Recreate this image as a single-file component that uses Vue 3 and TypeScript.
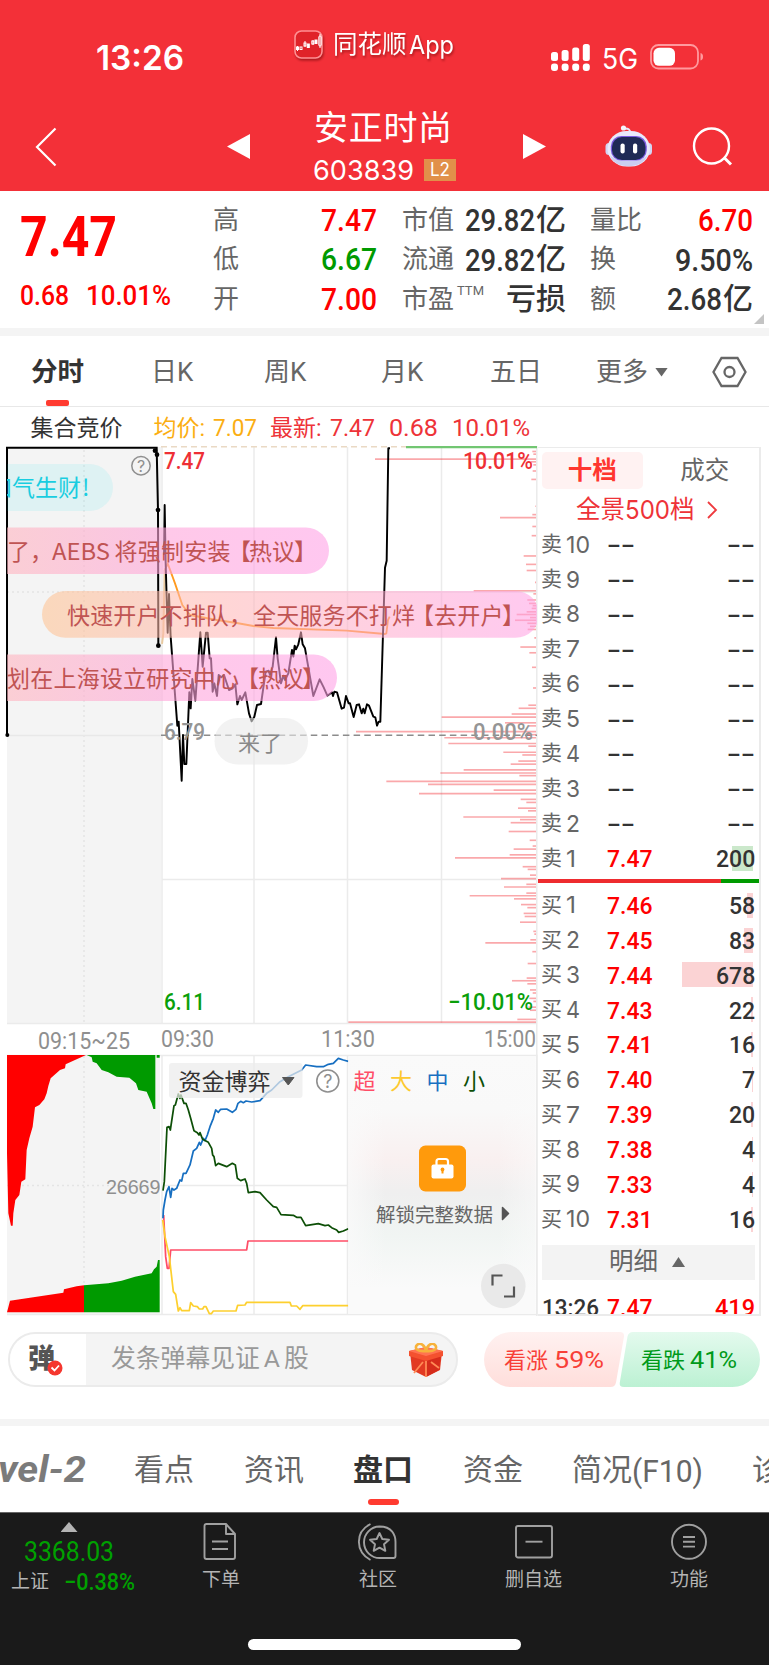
<script setup lang="ts">
import { defineComponent, h } from 'vue'

/** Condensed numeral label: a single line of text set to an exact width. */
const Fit = defineComponent({
  props: {
    t: { type: String, required: true },
    w: { type: Number, required: true },
    s: { type: Number, required: true },
  },
  setup(p) {
    return () =>
      h('svg', { class: 'fit', width: p.w, height: p.s, viewBox: `0 0 ${p.w} ${p.s}` }, [
        h('text', { x: 0, y: p.s * 0.856, 'font-size': p.s, textLength: p.w, lengthAdjust: 'spacingAndGlyphs' }, p.t),
      ])
  },
})

interface Level { side: string; no: string; price: string; vol: string; bar: number }

const asks: Level[] = [10, 9, 8, 7, 6, 5, 4, 3, 2].map((n) => ({ side: '卖', no: String(n), price: '--', vol: '--', bar: 0 }))
asks.push({ side: '卖', no: '1', price: '7.47', vol: '200', bar: 21 })

const bids: Level[] = (
  [
    ['7.46', '58', 6], ['7.45', '83', 9], ['7.44', '678', 71], ['7.43', '22', 2.5], ['7.41', '16', 2],
    ['7.40', '7', 1], ['7.39', '20', 2], ['7.38', '4', 0.6], ['7.33', '4', 0.6], ['7.31', '16', 2],
  ] as [string, string, number][]
).map(([price, vol, bar], i) => ({ side: '买', no: String(i + 1), price, vol, bar }))

const volWidth = (v: string) => (v === '--' ? 28 : v.length * 13.1)
const noWidth = (n: string) => (n === '1' ? 10 : n === '10' ? 24 : 14)

// Turnover distribution by price: [vertical offset, left end], right-aligned at 558
const dist: [number, number][] = [
  [30, 547], [37, 550], [50, 75], [57, 542], [65, 550], [81, 548], [103, 544], [173, 556], [195, 547], [203, 450],
  [226, 547], [250, 545], [303, 521], [325, 528], [341, 530], [372, 555], [394, 371], [402, 550], [418, 532], [427, 537],
  [433, 548], [440, 545], [449, 530], [456, 500], [464, 540], [471, 495], [479, 532], [487, 540], [495, 533], [517, 553],
  [541, 511], [556, 538], [594, 546], [648, 549], [693, 535], [701, 506], [716, 485], [724, 275], [739, 465], [747, 537],
  [762, 18], [770, 530], [778, 283], [793, 295], [800, 535], [816, 460], [823, 517], [839, 505], [847, 482], [862, 341],
  [870, 271], [877, 508], [892, 109], [900, 234], [915, 431], [924, 207], [939, 512], [947, 529], [962, 504], [969, 534],
  [985, 340], [992, 510], [1000, 482], [1023, 476], [1046, 539], [1061, 548], [1069, 491], [1084, 479], [1092, 315],
  [1115, 518], [1122, 533], [1137, 540], [1146, 453], [1161, 529], [1168, 462], [1184, 529], [1191, 359], [1199, 492],
  [1214, 513], [1222, 532], [1237, 521], [1245, 524], [1260, 510], [1284, 550], [1291, 553], [1306, 541], [1314, 406],
  [1337, 547], [1368, 533], [1406, 530], [1413, 486], [1421, 532], [1437, 540], [1445, 548], [1459, 538], [1467, 550],
  [1482, 535], [1490, 540], [1514, 502], [1521, -5],
]

const price =
  'M42 345L44 195 47 370 53 578 57 462 62 590 82 857 86 845 95 1022 99 885 103 972 109 972 118 757 122 805 127 717 136 782 151 577 158 680 168 578 173 578 179 655 183 655 188 755 193 730 201 768 206 705 214 712 222 705 237 750 248 745 256 733 262 793 270 768 275 780 286 757 297 820 305 844 313 830 321 795 333 792 347 695 356 692 360 705 368 680 378 592 383 655 388 692 393 730 400 707 405 720 415 700 426 630 430 650 434 617 438 628 445 613 453 577 458 613 465 625 472 665 490 768 509 718 521 742 532 767 546 757 549 768 553 755 561 757 575 806 582 803 588 768 596 790 600 790 611 831 620 795 627 793 635 820 640 806 644 820 651 793 657 797 670 830 676 832 681 857 686 845 691 845 705 383 710 362 715 25 720 25'
const avg = 'M45 390L53 370 75 430 97 495 120 525 200 540 260 549 310 558 370 564 590 572 705 582 709 580 714 540 719 530'

const flows = {
  mid: 'M489 625L490 600 495 570 500 545 507 530 512 562 516 535 522 540 530 535 540 510 545 513 550 490 558 490 570 465 580 423 590 415 598 397 602 405 610 385 615 392 622 375 630 350 640 325 647 300 655 307 662 298 680 297 697 307 708 298 714 280 722 274 730 278 738 273 755 276 780 272 800 250 815 240 840 215 865 200 905 180 917 165 950 170 970 170 985 163 1000 160 1015 145 1030 150 1045 154',
  small: 'M489 542L493 515 501 352 507 350 511 360 522 287 526 285 535 252 540 265 543 255 552 280 558 280 565 300 572 325 582 362 592 368 597 375 600 368 608 388 625 397 635 415 638 435 642 440 647 467 655 460 680 470 697 460 706 465 712 505 722 512 735 507 740 520 745 548 765 545 780 548 800 570 820 590 830 592 843 614 880 616 890 622 903 622 917 647 955 641 975 647 985 645 995 653 1010 660 1016 667 1030 663 1045 656',
  huge: 'M491 615L497 740 502 775 507 775 512 720 740 720 744 693 1045 693',
  big: 'M488 630L495 680 508 740 520 845 527 853 535 903 540 893 545 902 568 902 572 878 580 888 592 890 598 897 608 897 612 890 618 890 628 911 634 911 640 903 708 903 713 886 735 885 740 877 870 877 874 888 890 888 900 898 908 887 1045 887',
}
</script>

<template>
  <div class="screen">
    <header class="top">
      <div class="status">
        <span class="clock"><Fit t="13:26" :w="88" :s="34" /></span>
        <div class="brand">
          <svg width="29" height="29" viewBox="0 0 29 29">
            <rect x="1" y="1" width="27" height="27" rx="6.5" fill="#e02329" stroke="#ff9093" stroke-width="1.6" />
            <g stroke="#fff" stroke-width="1" fill="none">
              <path d="M3.5 16v5M11 11v6M19 10v5M26 4v14" />
              <rect x="2.5" y="17" width="2" height="2.5" fill="#fff" /><rect x="6" y="17" width="2" height="2.5" />
              <rect x="10" y="13" width="2" height="3" /><rect x="13.3" y="14" width="2" height="3.5" fill="#fff" />
              <rect x="17.8" y="11" width="2" height="3" /><rect x="21" y="10" width="2" height="3.5" fill="#fff" />
              <rect x="24.8" y="6" width="2.4" height="10" rx="1" />
            </g>
          </svg>
          <span>同花顺</span><Fit t="App" :w="45" :s="25" />
        </div>
        <div class="signals">
          <svg width="39" height="28" viewBox="0 0 39 28" fill="#fff">
            <rect x="0" y="8" width="7" height="9" rx="2.5" /><rect x="10.6" y="6" width="7" height="11" rx="2.5" />
            <rect x="21.2" y="3.5" width="7" height="13.5" rx="2.5" /><rect x="31.8" y="0" width="7" height="17" rx="2.5" />
            <rect x="0" y="19.5" width="7" height="7.5" rx="3" /><rect x="10.6" y="19.5" width="7" height="7.5" rx="3" />
            <rect x="21.2" y="19.5" width="7" height="7.5" rx="3" /><rect x="31.8" y="19.5" width="7" height="7.5" rx="3" />
          </svg>
          <span class="net"><Fit t="5G" :w="36" :s="28" /></span>
          <svg width="54" height="26" viewBox="0 0 54 26">
            <rect x="1" y="1" width="47" height="23.5" rx="7.5" fill="none" stroke="#ff9a9e" stroke-width="1.8" />
            <rect x="3.5" y="3.8" width="21.5" height="18" rx="5.5" fill="#fff" />
            <path d="M50.500 9Q53 9.500 53 12.800T50.500 16.500z" fill="#ff9a9e" />
          </svg>
        </div>
      </div>
      <nav class="title-bar">
        <svg class="back" width="22" height="40" viewBox="0 0 22 40" fill="none" stroke="#fff" stroke-width="2.2"><path d="M20.500 1.500L2 20l18.500 18.500" /></svg>
        <svg class="prev" width="23" height="26" viewBox="0 0 23 26"><path d="M23 0v25L0 12.500z" fill="#fff" /></svg>
        <div class="stock">
          <h1>安正时尚</h1>
          <div class="code"><Fit t="603839" :w="101" :s="27.5" /><span class="l2"><Fit t="L2" :w="20" :s="18" /></span></div>
        </div>
        <svg class="next" width="23" height="26" viewBox="0 0 23 26"><path d="M0 0v25l23-12.500z" fill="#fff" /></svg>
        <svg class="robot" width="48" height="45" viewBox="0 0 48 45">
          <path d="M19 4.500c4-.5 6.500 1 6 4.500" fill="none" stroke="#e6e8fb" stroke-width="2" /><circle cx="18.500" cy="4" r="2.600" fill="#f4f4fd" />
          <rect x="0.500" y="19" width="8" height="12" rx="3.500" fill="#d3d5f3" /><rect x="39" y="19" width="8" height="12" rx="3.500" fill="#d3d5f3" />
          <rect x="2.500" y="7" width="42.500" height="35.500" rx="19" fill="#e8e9fb" />
          <path d="M5 31c4 15 33 15 37.500 0-6 8-31 8-37.500 0z" fill="#cbcdf0" />
          <rect x="5.800" y="12" width="36" height="24.500" rx="10.500" fill="#7a5be0" /><rect x="7" y="13" width="33.500" height="23" rx="10" fill="#1f2a55" />
          <rect x="15.500" y="19.500" width="4.200" height="10" rx="2" fill="#fff" /><rect x="28" y="19.500" width="4.200" height="10" rx="2" fill="#fff" />
        </svg>
        <svg class="search" width="42" height="42" viewBox="0 0 42 42" fill="none" stroke="#fff" stroke-width="2.400"><circle cx="19.500" cy="20" r="17.500" /><path d="M32 31.500l7 7" stroke-width="3" /></svg>
      </nav>
    </header>

    <section class="quote">
      <div class="last">
        <Fit t="7.47" :w="97" :s="55" />
        <div class="chg"><Fit t="0.68" :w="49" :s="28.5" /><Fit t="10.01%" :w="85" :s="28.5" /></div>
      </div>
      <dl class="col c1">
        <div><dt>高</dt><dd class="up"><Fit t="7.47" :w="56" :s="31" /></dd></div>
        <div><dt>低</dt><dd class="down"><Fit t="6.67" :w="56" :s="31" /></dd></div>
        <div><dt>开</dt><dd class="up"><Fit t="7.00" :w="56" :s="31" /></dd></div>
      </dl>
      <dl class="col c2">
        <div><dt>市值</dt><dd><Fit t="29.82" :w="70" :s="31" />亿</dd></div>
        <div><dt>流通</dt><dd><Fit t="29.82" :w="70" :s="31" />亿</dd></div>
        <div><dt>市盈<sup>TTM</sup></dt><dd>亏损</dd></div>
      </dl>
      <dl class="col c3">
        <div><dt>量比</dt><dd class="up"><Fit t="6.70" :w="55" :s="31" /></dd></div>
        <div><dt>换</dt><dd><Fit t="9.50%" :w="78" :s="31" /></dd></div>
        <div><dt>额</dt><dd><Fit t="2.68" :w="55" :s="31" />亿</dd></div>
      </dl>
      <i class="corner"></i>
    </section>

    <nav class="periods">
      <b>分时</b><span>日K</span><span>周K</span><span>月K</span><span>五日</span>
      <span class="more">更多<i></i></span>
      <svg width="35" height="32" viewBox="0 0 35 32" fill="none" stroke="#666" stroke-width="2.300"><path d="M9.500 2h16l8 14-8 14h-16l-8-14z" /><circle cx="17.500" cy="16" r="5" /></svg>
    </nav>

    <div class="legend">
      <span class="auction">集合竞价</span>
      <span class="avg">均价:<Fit t="7.07" :w="44" :s="23.5" /></span>
      <span class="new">最新:<Fit t="7.47" :w="45" :s="23.5" /></span>
      <span class="new"><Fit t="0.68" :w="49" :s="23.5" /></span>
      <span class="new"><Fit t="10.01%" :w="78" :s="23.5" /></span>
    </div>

    <main class="market">
      <svg class="chart" width="538" height="870" viewBox="0 446 538 870">
        <defs>
          <linearGradient id="g-rose"><stop offset="0" stop-color="#ffbcb4" /><stop offset=".55" stop-color="#ffa5d9" /><stop offset="1" stop-color="#ffa2e6" /></linearGradient>
          <linearGradient id="g-peach"><stop offset="0" stop-color="#ffc290" /><stop offset=".3" stop-color="#ffb8b0" /><stop offset="1" stop-color="#ff9fe4" /></linearGradient>
          <linearGradient id="g-lock" x1="0" x2="0" y1="0" y2="1"><stop offset="0" stop-color="#fafafa" /><stop offset=".2" stop-color="#f9f9f9" /><stop offset=".4" stop-color="#f9f0f0" /><stop offset=".53" stop-color="#efefef" /><stop offset=".7" stop-color="#f1f5f3" /><stop offset=".9" stop-color="#fafafa" /></linearGradient>
          <linearGradient id="g-side"><stop offset="0" stop-color="#fafafa" stop-opacity=".8" /><stop offset=".2" stop-color="#fafafa" stop-opacity="0" /><stop offset=".8" stop-color="#fafafa" stop-opacity="0" /><stop offset="1" stop-color="#fafafa" stop-opacity=".6" /></linearGradient>
          <clipPath id="plot"><rect x="7" y="446" width="530" height="580" /></clipPath>
        </defs>

        <!-- price pane -->
        <rect x="7" y="447" width="154" height="577" fill="#f4f4f4" />
        <g fill="none" stroke="#ebebeb" stroke-width="1.500">
          <path d="M7 1023.500H537M162 447V1023M254 447V1023M347.500 447V1023M441.500 447V1023M162 592H537M162 879.500H537M536.800 446V1316" />
          <path d="M84 450V1023M7 592H160" stroke-dasharray="2 3" stroke="#e4e4e4" />
          <path d="M7 735.500H161" stroke="#e8e8e8" />
        </g>
        <path d="M161 446.500H537" stroke="#ead9c4" stroke-width="1.800" stroke-dasharray="6 4" />
        <path d="M161 735.200H537" stroke="#8c8c8c" stroke-width="1.500" stroke-dasharray="6.500 4.200" />
        <g transform="translate(350 440) scale(.33333 .38270)">
          <path v-for="d in dist" :key="d[0]" :d="`M${d[1]} ${d[0]}H558`" stroke="#f33038" stroke-opacity=".42" stroke-width="4.300" />
        </g>
        <path d="M406 447.200H537" stroke="#72c672" stroke-width="2.200" />
        <g transform="translate(150 440) scale(.33333)" fill="none" stroke-linejoin="round">
          <path d="M-429 885V23H20L24 210 25 617" stroke="#000" stroke-width="6" stroke-linejoin="miter" />
          <g fill="#000"><circle cx="-428" cy="885" r="6" /><circle cx="15" cy="32" r="7" /><circle cx="21" cy="44" r="7" /><circle cx="24" cy="210" r="7" /><circle cx="25" cy="617" r="7" /></g>
          <path d="M36 612L40 580 44 390" stroke="#e8c9a0" stroke-width="6" />
          <path :d="avg" stroke="#ff9a1f" stroke-width="5.500" />
          <path :d="price" stroke="#000" stroke-width="5.800" />
        </g>
        <g class="num" font-size="23">
          <text x="164" y="468.500" textLength="41" lengthAdjust="spacingAndGlyphs" fill="#ee2f35">7.47</text>
          <text x="463" y="468.500" textLength="70" lengthAdjust="spacingAndGlyphs" fill="#ee2f35">10.01%</text>
          <text x="164" y="739.500" textLength="41" lengthAdjust="spacingAndGlyphs" fill="#959595">6.79</text>
          <text x="473" y="739.500" textLength="60" lengthAdjust="spacingAndGlyphs" fill="#959595">0.00%</text>
          <text x="164" y="1010" textLength="41" lengthAdjust="spacingAndGlyphs" fill="#0a9f0a">6.11</text>
          <text x="448" y="1010" textLength="85" lengthAdjust="spacingAndGlyphs" fill="#0a9f0a">−10.01%</text>
        </g>
        <circle cx="141" cy="465.800" r="9.200" fill="none" stroke="#8f8f8f" stroke-width="1.500" />
        <text class="query" x="141" y="471.500" font-size="16" text-anchor="middle">?</text>

        <!-- drifting comments -->
        <g class="danmu" clip-path="url(#plot)" font-size="23">
          <rect x="-60" y="464" width="173" height="47" rx="23.500" fill="#00d9e8" fill-opacity=".09" />
          <g fill="#19cde0"><text x="-11" y="495.500" textLength="92" lengthAdjust="spacing">和气生财</text><text x="82" y="495.500">!</text></g>
          <rect x="-60" y="527.500" width="389" height="46.500" rx="23.200" fill="url(#g-rose)" fill-opacity=".6" />
          <g fill="#c05453"><text x="7" y="559.500">了，</text><text x="52" y="559.500" textLength="58" lengthAdjust="spacingAndGlyphs">AEBS</text><text x="114.500" y="559.500" textLength="116">将强制安装</text><text x="228" y="559.500">【</text><text x="249" y="559.500" textLength="46">热议</text><text x="294" y="559.500">】</text></g>
          <rect x="42" y="591" width="497" height="46.800" rx="23.400" fill="url(#g-peach)" fill-opacity=".56" />
          <g fill="#c05453"><text x="67" y="623.500" textLength="185">快速开户不排队，</text><text x="253" y="623.500" textLength="162">全天服务不打烊</text><text x="411" y="623.500">【</text><text x="434" y="623.500" textLength="69.500">去开户</text><text x="502" y="623.500">】</text></g>
          <rect x="-60" y="654.500" width="397" height="46.500" rx="23.200" fill="url(#g-rose)" fill-opacity=".6" />
          <g fill="#c05453"><text x="7" y="687" textLength="232">划在上海设立研究中心</text><text x="236" y="687">【</text><text x="258" y="687" textLength="46">热议</text><text x="302" y="687">】</text></g>
          <rect x="214.500" y="718" width="93.500" height="46.500" rx="23.200" fill="#e9e9e9" fill-opacity=".6" />
          <text x="238" y="750.500" font-size="22" fill="#898989">来了</text>
        </g>

        <g class="axis" font-size="23" fill="#8f8f8f">
          <text x="38" y="1048.500" textLength="92" lengthAdjust="spacingAndGlyphs">09:15~25</text>
          <text x="161" y="1047" textLength="53" lengthAdjust="spacingAndGlyphs">09:30</text>
          <text x="321" y="1047" textLength="54" lengthAdjust="spacingAndGlyphs">11:30</text>
          <text x="484" y="1047" textLength="52" lengthAdjust="spacingAndGlyphs">15:00</text>
        </g>

        <!-- capital flow pane -->
        <rect x="7" y="1055" width="153" height="260" fill="#f4f4f4" />
        <g fill="none" stroke="#ebebeb" stroke-width="1.500">
          <path d="M7 1055.500H537V1314.500H7M162 1055V1314M254 1055V1314M347.500 1055V1314M162 1185.500H347" />
          <path d="M84 1056V1284M7 1185.500H160" stroke-dasharray="2 3" stroke="#e4e4e4" />
        </g>
        <g transform="translate(0 1010) scale(.33333)">
          <path fill="#f00" d="M21 135H258L225 150 197 163 195 175 180 180 152 205 145 228 140 250 133 268 118 285 105 292 98 350 88 385 80 420 76 508 64 515 58 555 46 570 40 610 38 647H33L25 610 21 430zM21 907L30 872 60 868 100 862 140 856 190 848 192 838 230 829 252 826V907z" />
          <path fill="#009a00" d="M260 135H466V297H460L455 280 440 245 415 240 408 220 388 203 350 200 325 187 305 180 290 160 278 155 275 142zM470 135h9v8h-9zM252 826L325 820 365 812 405 800 455 790 462 778 470 770 474 750H479V907H252z" />
          <g fill="none" stroke-width="5.200" stroke-linejoin="round">
            <path :d="flows.huge" stroke="#ff4d67" /><path :d="flows.big" stroke="#fdd02f" /><path :d="flows.mid" stroke="#176fc1" /><path :d="flows.small" stroke="#0d4f07" />
          </g>
        </g>
        <text class="mid" x="106" y="1193.500" font-size="19.800" textLength="54.500" fill="#8f8f8f">26669</text>
        <rect x="169" y="1063" width="133.500" height="35" rx="3" fill="#ececec" fill-opacity=".72" />
        <text class="danmu" x="178.500" y="1089.500" font-size="23" fill="#333">资金博弈</text>
        <path d="M282.500 1077.500h11.500l-5.750 7.500z" fill="#555" stroke="#555" stroke-linejoin="round" />
        <circle cx="327.800" cy="1081" r="11" fill="none" stroke="#8f8f8f" stroke-width="1.600" />
        <text class="query" x="327.800" y="1087.500" font-size="18" text-anchor="middle">?</text>

        <!-- locked area -->
        <rect x="348.500" y="1057" width="187" height="257" fill="url(#g-lock)" />
        <rect x="348.500" y="1057" width="187" height="257" fill="url(#g-side)" />
        <g class="danmu" font-size="22">
          <text x="353.500" y="1088.500" fill="#ff4d67">超</text><text x="390" y="1088.500" fill="#fdc92f">大</text>
          <text x="426.500" y="1088.500" fill="#176fc1">中</text><text x="463" y="1088.500" fill="#0d4f07">小</text>
          <text x="376" y="1221.500" font-size="19.500" fill="#666">解锁完整数据</text>
        </g>
        <rect x="419" y="1145.500" width="47" height="46" rx="6.500" fill="#ff9a0c" />
        <path d="M436.500 1166v-4.500q0-2.500 2.500-2.500h6.500q2.500 0 2.500 2.500v4.500" fill="none" stroke="#fff" stroke-width="2.200" />
        <rect x="431.500" y="1164.500" width="22" height="14" rx="2" fill="#fff" />
        <path d="M442.500 1168.500v5" stroke="#ff9a0c" stroke-width="2" /><circle cx="442.500" cy="1169.500" r="1.900" fill="#ff9a0c" />
        <path d="M502.500 1207.500l6 6-6 6z" fill="#555" stroke="#555" stroke-width="1.500" stroke-linejoin="round" />
        <circle cx="503.300" cy="1286" r="22.300" fill="#e9e9e9" />
        <path d="M492.500 1285.500v-10h10M504 1296.500h10v-10" fill="none" stroke="#555" stroke-width="2.200" />
      </svg>

      <aside class="book">
        <div class="book-tabs"><b>十档</b><span>成交</span></div>
        <div class="full">全景<Fit t="500" :w="45" :s="26" />档
          <svg width="11" height="18" viewBox="0 0 11 18" fill="none" stroke="#ee3a3e" stroke-width="1.800"><path d="M1 1l8 8-8 8" /></svg>
        </div>
        <div v-for="l in asks" :key="'a' + l.no" class="lv">
          <span class="side">{{ l.side }}<Fit :t="l.no" :w="noWidth(l.no)" :s="23.5" /></span>
          <span :class="l.price === '--' ? 'none' : 'px'"><Fit :t="l.price" :w="l.price === '--' ? 28 : 45.5" :s="24.5" /></span>
          <span class="vol sell"><i :style="{ width: l.bar + 'px' }"></i><Fit :t="l.vol" :w="volWidth(l.vol)" :s="24.5" /></span>
        </div>
        <div class="ratio"><i></i></div>
        <div v-for="l in bids" :key="'b' + l.no" class="lv">
          <span class="side">{{ l.side }}<Fit :t="l.no" :w="noWidth(l.no)" :s="23.5" /></span>
          <span class="px"><Fit :t="l.price" :w="45.5" :s="24.5" /></span>
          <span class="vol"><i :style="{ width: l.bar + 'px' }"></i><Fit :t="l.vol" :w="volWidth(l.vol)" :s="24.5" /></span>
        </div>
        <div class="detail">明细<i></i></div>
        <div class="lv tick">
          <span class="at"><Fit t="13:26" :w="57" :s="24.5" /></span>
          <span class="px"><Fit t="7.47" :w="45.5" :s="24.5" /></span>
          <span class="vol px"><Fit t="419" :w="40" :s="24.5" /></span>
        </div>
      </aside>
    </main>

    <section class="chat">
      <div class="input">
        <div class="toggle"><b>弹</b>
          <svg width="16" height="16" viewBox="0 0 16 16"><circle cx="8" cy="8" r="7.500" fill="#f5372f" /><path d="M4.500 7.500l3 3 4.500-5" fill="none" stroke="#fff" stroke-width="1.800" /></svg>
        </div>
        <span class="hint">发条弹幕见证<em>A</em>股</span>
        <svg class="gift" width="34" height="34" viewBox="0 0 34 34">
          <path d="M1 9l16-3 16 3-2 18-14 7-14-7z" fill="#e23a22" /><path d="M17 14l15-4-2 17-13 7z" fill="#d52c1b" />
          <path d="M0 8l17-4 17 4v5l-17 5-17-5z" fill="#f4512f" /><path d="M0 8l17-4 17 4-17 5z" fill="#ff7350" />
          <path d="M5 30l9-11M22 19l8 6M17 18v16" stroke="#ff8a55" stroke-width="1.800" />
          <path d="M17 8C8 9 5 5 8 2s8 0 9 6c1-6 6-9 9-6s0 7-9 6z" fill="none" stroke="#f7b23b" stroke-width="2.600" />
        </svg>
      </div>
      <svg class="vote" width="276" height="55" viewBox="0 0 276 55">
        <defs>
          <linearGradient id="v-up" x1="0" x2="0" y1="0" y2="1"><stop offset="0" stop-color="#fff1f0" /><stop offset="1" stop-color="#ffdedb" /></linearGradient>
          <linearGradient id="v-dn" x1="0" x2="0" y1="0" y2="1"><stop offset="0" stop-color="#e4faee" /><stop offset="1" stop-color="#bcf1d3" /></linearGradient>
        </defs>
        <path d="M27.500 0H136q4.500 0 4 4.500L132 50.500q-1 4.500-5.500 4.500H27.500a27.500 27.500 0 0 1 0-55z" fill="url(#v-up)" />
        <path d="M149 0H248.500a27.500 27.500 0 0 1 0 55H140q-5 0-4.200-4.500L143.500 4.500Q144.500 0 149 0z" fill="url(#v-dn)" />
        <g font-size="22"><g fill="#f83f37"><text class="danmu" x="20" y="35.500">看涨</text><text class="pct" x="70" y="35.500" font-size="24" textLength="50" lengthAdjust="spacingAndGlyphs">59%</text></g>
        <g fill="#009a1a"><text class="danmu" x="157" y="35.500">看跌</text><text class="pct" x="206" y="35.500" font-size="24" textLength="47" lengthAdjust="spacingAndGlyphs">41%</text></g></g>
      </svg>
    </section>

    <nav class="sections">
      <em><Fit t="vel-2" :w="88" :s="36" /></em><span>看点</span><span>资讯</span><b>盘口</b><span>资金</span>
      <span>简况<Fit t="(F10)" :w="71" :s="31" /></span><span>诊</span>
    </nav>

    <footer class="dock">
      <div class="index">
        <i></i>
        <Fit t="3368.03" :w="90" :s="28" />
        <div><span>上证</span><Fit t="−0.38%" :w="71" :s="23" /></div>
      </div>
      <a><svg width="38" height="38" viewBox="0 0 38 38"><path d="M4.500 1H24l9 10v23q0 2-2 2H4.500q-2 0-2-2V3q0-2 2-2zM24 1v10h9M10 18.500h16M10 26h16" /></svg><span>下单</span></a>
      <a><svg width="42" height="38" viewBox="0 0 42 38"><path d="M13.500 1C-2 9-2 28 13.500 37M22.500 3.500C35 3.500 38.500 12 38.500 19V33q0 2-2 2H23A15.700 15.700 0 0 1 22.500 3.500zM22.500 10l2.800 6 6.700.8-5 4.500 1.300 6.500-5.800-3.200-5.800 3.200 1.300-6.500-5-4.500 6.700-.8z" /></svg><span>社区</span></a>
      <a><svg width="38" height="38" viewBox="0 0 38 38"><rect x="1" y="3" width="36" height="31.500" rx="2" /><path d="M10.500 18.700h17" /></svg><span>删自选</span></a>
      <a><svg width="38" height="38" viewBox="0 0 38 38"><circle cx="19" cy="18.800" r="17" /><path d="M13 14h12M13 18.800h12M13 23.600h12" /></svg><span>功能</span></a>
      <div class="home"></div>
    </footer>
  </div>
</template>

<style>
body { margin: 0; background: #fff; }
</style>

<style scoped>
.screen { width: 769px; height: 1665px; overflow: hidden; display: flex; flex-direction: column; background: #fff; font-family: Roboto, "Noto Sans CJK SC", sans-serif; color: #333; line-height: 1; }
.fit { display: block; overflow: visible; fill: currentColor; flex: none; font-family: Roboto, "Noto Sans", sans-serif; }
i { font-style: normal; display: block; }
svg { flex: none; }

.top { height: 191px; background: #f33038; color: #fff; }
.status { height: 100px; display: grid; grid-template-columns: 294px 257px 1fr; }
.clock { padding: 41px 0 0 96px; font-weight: 600; }
.clock .fit, .net .fit { font-family: Inter, sans-serif; }
.brand { display: flex; align-items: center; height: 30px; padding-top: 29px; font-size: 24.5px; filter: drop-shadow(1px 2px 1px rgba(90, 0, 0, .45)); }
.brand span { margin: 2px 2px 0 10px; }
.brand .fit { font-family: Inter, sans-serif; margin-top: 2px; }
.signals { display: flex; align-items: flex-start; padding-top: 44px; }
.net { margin: 1px 12px 0 12px; font-weight: 400; }
.title-bar { display: grid; grid-template-columns: 192px 86px 210px 82px 86px 1fr; padding-left: 35px; height: 91px; align-items: start; }
.back { margin-top: 27px; }
.prev, .next { margin-top: 34px; }
.stock h1 { margin: 10px 0 13px 1px; font-weight: 400; font-size: 34px; height: 36px; line-height: 36px; letter-spacing: .7px; }
.code { display: flex; align-items: center; gap: 10px; height: 22px; }
.code .fit { font-family: Inter, sans-serif; }
.l2 { width: 32px; height: 22px; background: #e1904a; display: flex; align-items: center; justify-content: center; }
.robot { margin-top: 24px; }
.search { margin: 26px 0 0 1px; }

.quote { height: 137px; position: relative; display: grid; grid-template-columns: 213px 164px 25px 164px 24px 163px; border-bottom: 8px solid #f4f4f4; }
.last { padding: 18px 0 0 20px; color: #f00; font-weight: 700; }
.chg { display: flex; gap: 17px; margin-top: 17px; font-weight: 500; }
.col { margin: 9px 0 0; }
.col > div { height: 39.5px; display: flex; justify-content: space-between; align-items: center; }
.c2 { grid-column: 4; }
.c3 { grid-column: 6; }
dt { font-size: 26px; color: #666; white-space: nowrap; }
dt sup { font-size: 13px; vertical-align: 13px; line-height: 0; margin-left: 3px; }
dd { margin: 0; display: flex; align-items: center; font-size: 30px; font-weight: 500; gap: 1px; white-space: nowrap; }
.c1 .fit, .c3 .up .fit { margin-top: -1px; }
.up, .px { color: #f00; }
.down { color: #009a00; }
.corner { position: absolute; right: 5px; bottom: 4px; width: 10px; height: 10px; background: #c4c4c4; clip-path: polygon(100% 0, 100% 100%, 0 100%); }

.periods { height: 70px; display: grid; grid-template-columns: 120px 113px 117px 109px 106px 116px 1fr; padding: 2px 0 0 31px; box-sizing: content-box; height: 68px; align-items: center; font-size: 26px; color: #666; border-bottom: 1px solid #e8e8e8; }
.periods b { font-size: 26.500px; color: #333; font-weight: 700; position: relative; }
.periods b::after { content: ''; position: absolute; left: 15px; top: 41px; width: 23px; height: 6px; border-radius: 2px; background: #ff3b30; }
.more { display: flex; align-items: center; gap: 7px; }
.more i { width: 13px; height: 9px; background: #666; clip-path: polygon(0 0, 100% 0, 50% 100%); }

.legend { height: 39px; padding: 3px 0 0 30.500px; box-sizing: border-box; display: flex; align-items: center; font-size: 23px; }
.legend span { display: flex; align-items: center; gap: 8px; margin-right: 14px; }
.legend .auction { margin-right: 31px; }
.legend .avg { color: #fbae12; margin-right: 13px; }
.new { color: #ee3338; }

.market { height: 870px; display: flex; }
.chart { display: block; }
.num { font-family: Roboto, sans-serif; font-weight: 500; }
.axis, .pct { font-family: Roboto, sans-serif; }
.mid { font-family: "Liberation Sans", sans-serif; }
.query { font-family: Inter, sans-serif; fill: #8f8f8f; }
.danmu { font-family: "Noto Sans CJK SC", sans-serif; }

.book { width: 223px; height: 869px; box-sizing: border-box; overflow: hidden; margin-top: 1px; padding: 4px 4px 0 4px; border: solid #ebebeb; border-width: 1px 2px 2px 0; }
.book-tabs { display: flex; font-size: 24.500px; height: 37px; }
.book-tabs > * { width: 101px; height: 37px; line-height: 37px; text-align: center; border-radius: 5px; color: #666; }
.book-tabs b { background: #fff2f2; color: #ff362f; font-weight: 700; margin-right: 12px; }
.full { height: 34px; padding-top: 4px; padding-left: 34px; display: flex; align-items: center; font-size: 24.500px; color: #ee3338; }
.full svg:last-child { margin-left: 12px; }
.full .fit { font-family: Inter, sans-serif; }
.lv { height: 34.890px; display: grid; grid-template-columns: 65px 60px 1fr; align-items: center; }
.side { display: flex; align-items: center; gap: 4px; color: #666; font-size: 21px; margin-left: -1px; }
.side .fit { font-family: Inter, sans-serif; }
.px, .vol, .none, .at { font-weight: 500; }
.none { color: #333; }
.vol { display: flex; align-items: center; justify-content: flex-end; height: 25px; position: relative; }
.vol .fit { position: relative; }
.vol i { position: absolute; right: 2px; top: 0; height: 25px; background: #fbd3d4; }
.vol.sell i { background: #cbe8cb; }
.ratio { height: 4px; margin: 3px -6px 5px -4px; background: #ee2b2f; display: flex; justify-content: flex-end; }
.ratio i { width: 40px; background: #009a00; }
.detail { margin-top: 8px; height: 35px; background: #f3f3f3; display: flex; align-items: center; justify-content: center; gap: 14px; font-size: 24.500px; color: #666; padding-right: 3px; }
.detail i { width: 13px; height: 10px; background: #666; clip-path: polygon(50% 0, 100% 100%, 0 100%); }
.tick { margin-top: 10px; }

.chat { height: 103px; box-sizing: border-box; padding: 16px 9px 0 8px; display: flex; justify-content: space-between; }
.input { width: 450px; height: 55px; box-sizing: border-box; border: 2px solid #ebebeb; border-radius: 28px; background: #f4f4f4; display: flex; align-items: center; overflow: hidden; }
.toggle { width: 76px; height: 51px; background: #fff; display: flex; align-items: center; padding-left: 18px; box-sizing: border-box; }
.toggle b { font-size: 27px; font-weight: 900; color: #555; }
.toggle svg { margin: 16px 0 0 -8px; }
.hint { margin-left: 25px; font-size: 24.800px; color: #999; width: 298px; }
.hint em { font-style: normal; margin: 0 4px; }

.sections { height: 93px; box-sizing: border-box; border-top: 7px solid #f4f4f4; display: grid; grid-template-columns: 134px 110px 109px 110px 109px 180px 60px; align-items: center; font-size: 30px; color: #666; }
.sections > em { margin-left: -2px; font-weight: 700; color: #7b7b7b; }
.sections > span, .sections > b { display: flex; align-items: center; white-space: nowrap; margin-top: 2px; }
.sections b { color: #333; font-weight: 700; position: relative; }
.sections b::after { content: ''; position: absolute; left: 15px; top: 44px; width: 31px; height: 6px; border-radius: 3px; background: #ff3b30; }

.dock { flex: 1; background: #1a1a1a; border-top: 1px solid #666; display: grid; grid-template-columns: 142px 158px 156px 155px 156px; position: relative; color: #b4b4b4; }
.index { display: flex; flex-direction: column; align-items: center; color: #00a000; padding-top: 9px; padding-right: 4px; }
.index i { width: 17px; height: 10px; margin-bottom: 5px; background: #b4b4b4; clip-path: polygon(50% 0, 100% 100%, 0 100%); }
.index > div { display: flex; align-items: center; gap: 15px; margin: 5px -8px 0 0; font-weight: 500; }
.index span { color: #b4b4b4; font-size: 19px; font-weight: 400; }
.dock a { display: flex; flex-direction: column; align-items: center; padding-top: 10px; gap: 9px; font-size: 19px; }
.dock a svg { fill: none; stroke: #a0a0a0; stroke-width: 1.900; stroke-linejoin: round; }
.home { position: absolute; left: 248px; bottom: 15px; width: 273px; height: 11px; border-radius: 5.500px; background: #fff; }
</style>
